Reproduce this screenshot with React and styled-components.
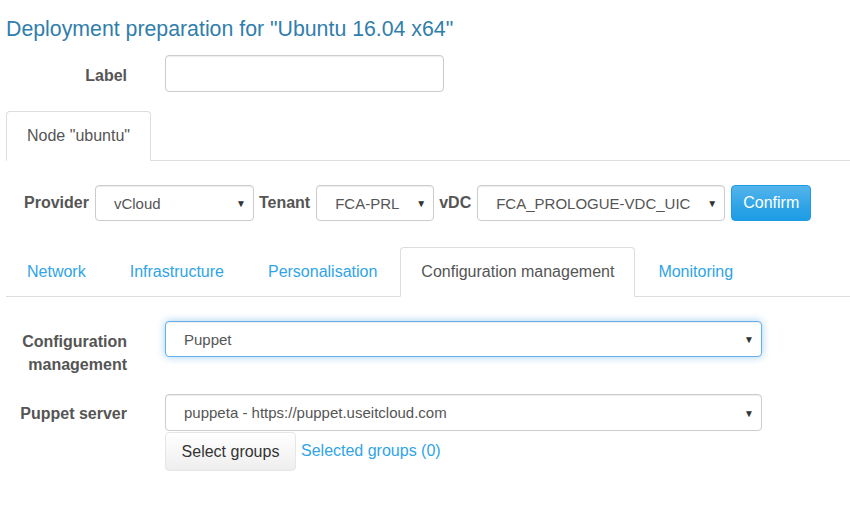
import React from 'react'
import styled, {createGlobalStyle} from 'styled-components'

const GlobalStyle = createGlobalStyle`
body {
  margin: 0;
  background: #fff;
  font-family: "Liberation Sans", Arial, sans-serif;
  font-size: 16px;
  color: #555;
}
* { box-sizing: border-box; }
`

const Page = styled.div`
padding: 0 0 0 6px;
`

const Title = styled.h3`
margin: 18px 0 15px;
font-size: 21.3px;
line-height: 22px;
font-weight: normal;
color: #317eac;
`

const FormRow = styled.div`
display: grid;
grid-template-columns: 121px ${pr => pr.width || '597px'};
column-gap: 38px;
margin-bottom: ${pr => pr.mb || '0px'};
`

const FieldLabel = styled.label`
text-align: right;
font-weight: bold;
line-height: 23px;
padding-top: ${pr => pr.pt || '8px'};
color: #555;
`

const TextInput = styled.input`
height: 37px;
width: 100%;
border: 1px solid #ccc;
border-radius: 4px;
box-shadow: inset 0 1px 1px rgba(0,0,0,.075);
font: inherit;
padding: 0 18px;
`

const SelectWrap = styled.div`
position: relative;
width: ${pr => pr.width || '100%'};
height: ${pr => pr.h || '36px'};
&::after {
  content: '▼';
  position: absolute;
  right: 8px;
  top: 50%;
  transform: translateY(-50%);
  font-size: 10px;
  color: #333;
  pointer-events: none;
}
`

const Select = styled.select`
appearance: none;
-webkit-appearance: none;
width: 100%;
height: 100%;
font: inherit;
font-size: 15px;
color: #555;
background: #fff;
padding: 0 22px 0 18px;
border: 1px solid ${pr => pr.focused ? '#66afe9' : '#ccc'};
border-radius: 4px;
box-shadow: ${pr => pr.focused
  ? 'inset 0 1px 1px rgba(0,0,0,.075), 0 0 8px rgba(102,175,233,.6)'
  : 'inset 0 1px 1px rgba(0,0,0,.075)'};
outline: none;
`

const Tabs = styled.ul`
display: flex;
list-style: none;
margin: ${pr => pr.margin || '0'};
padding: 0;
border-bottom: 1px solid #ddd;
`

const Tab = styled.li`
margin: 0 2px -1px 0;
padding: 14px 20px;
line-height: 20px;
border: 1px solid ${pr => pr.active ? '#ddd' : 'transparent'};
border-bottom-color: ${pr => pr.active ? '#fff' : 'transparent'};
border-radius: 4px 4px 0 0;
background: ${pr => pr.active ? '#fff' : 'transparent'};
color: ${pr => pr.active ? '#555' : '#2fa4e7'};
cursor: pointer;
`

const ToolRow = styled.div`
display: flex;
align-items: center;
gap: 5px;
margin: 24px 0 0 18px;
`

const InlineLabel = styled.span`
font-weight: bold;
color: #555;
margin-right: 1px;
`

const ConfirmButton = styled.button`
height: 36px;
padding: 0 11px;
font: inherit;
color: #fff;
border: 1px solid #1d9ce5;
border-radius: 4px;
background: linear-gradient(#54b4eb, #2fa4e7 60%, #1d9ce5);
margin-left: 1px;
`

const GroupsRow = styled.div`
display: flex;
align-items: center;
gap: 5px;
margin-top: 1px;
`

const DefaultButton = styled.button`
height: 39px;
width: 131px;
font: inherit;
color: #333;
border: 1px solid #e6e6e6;
border-radius: 4px;
background: linear-gradient(#fff, #f5f5f5 60%, #eee);
`

const Link = styled.a`
color: #2fa4e7;
text-decoration: none;
margin-top: -2px;
`

const App = () => {
  return (
    <Page>
      <GlobalStyle />
      <Title>Deployment preparation for "Ubuntu 16.04 x64"</Title>
      <FormRow width="279px">
        <FieldLabel pt="9px">Label</FieldLabel>
        <TextInput type="text" />
      </FormRow>

      <Tabs margin="19px 0 0">
        <Tab active>Node "ubuntu"</Tab>
      </Tabs>

      <ToolRow>
        <InlineLabel>Provider</InlineLabel>
        <SelectWrap width="159px">
          <Select defaultValue="vCloud"><option>vCloud</option></Select>
        </SelectWrap>
        <InlineLabel>Tenant</InlineLabel>
        <SelectWrap width="118px">
          <Select defaultValue="FCA-PRL"><option>FCA-PRL</option></Select>
        </SelectWrap>
        <InlineLabel>vDC</InlineLabel>
        <SelectWrap width="248px">
          <Select defaultValue="FCA_PROLOGUE-VDC_UIC"><option>FCA_PROLOGUE-VDC_UIC</option></Select>
        </SelectWrap>
        <ConfirmButton>Confirm</ConfirmButton>
      </ToolRow>

      <Tabs margin="26px 0 0">
        <Tab>Network</Tab>
        <Tab>Infrastructure</Tab>
        <Tab>Personalisation</Tab>
        <Tab active>Configuration management</Tab>
        <Tab>Monitoring</Tab>
      </Tabs>

      <div style={{height: 24}} />

      <FormRow mb="18px">
        <FieldLabel pt="9px">Configuration management</FieldLabel>
        <SelectWrap>
          <Select focused defaultValue="Puppet"><option>Puppet</option></Select>
        </SelectWrap>
      </FormRow>

      <FormRow>
        <FieldLabel>Puppet server</FieldLabel>
        <div>
          <SelectWrap h="37px">
            <Select defaultValue="p"><option value="p">puppeta - https://puppet.useitcloud.com</option></Select>
          </SelectWrap>
          <GroupsRow>
            <DefaultButton>Select groups</DefaultButton>
            <Link href="#">Selected groups (0)</Link>
          </GroupsRow>
        </div>
      </FormRow>
    </Page>
  )
}

export default App
